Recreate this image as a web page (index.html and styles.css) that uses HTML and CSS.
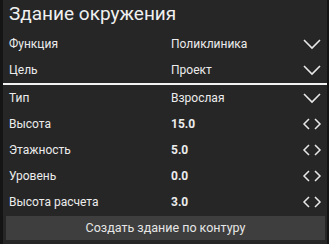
FILE: index.html
```html
<!DOCTYPE html>
<html>
<head>
<meta charset="utf-8">
<link rel="stylesheet" href="styles.css">
</head>
<body>
<div class="panel">
  <div class="title">Здание окружения</div>
  <div class="row">
    <span class="label">Функция</span><span class="value">Поликлиника</span>
    <svg class="icon" viewBox="0 0 20 12"><path d="M2 2 L10 10 L18 2" /></svg>
  </div>
  <div class="row">
    <span class="label">Цель</span><span class="value">Проект</span>
    <svg class="icon" viewBox="0 0 20 12"><path d="M2 2 L10 10 L18 2" /></svg>
  </div>
  <div class="sep"></div>
  <div class="row">
    <span class="label">Тип</span><span class="value">Взрослая</span>
    <svg class="icon" viewBox="0 0 20 12"><path d="M2 2 L10 10 L18 2" /></svg>
  </div>
  <div class="row">
    <span class="label">Высота</span><span class="value num">15.0</span>
    <svg class="icon lr" viewBox="0 0 20 14"><path d="M7 2 L2 7 L7 12 M13 2 L18 7 L13 12" /></svg>
  </div>
  <div class="row">
    <span class="label">Этажность</span><span class="value num">5.0</span>
    <svg class="icon lr" viewBox="0 0 20 14"><path d="M7 2 L2 7 L7 12 M13 2 L18 7 L13 12" /></svg>
  </div>
  <div class="row">
    <span class="label">Уровень</span><span class="value num">0.0</span>
    <svg class="icon lr" viewBox="0 0 20 14"><path d="M7 2 L2 7 L7 12 M13 2 L18 7 L13 12" /></svg>
  </div>
  <div class="row">
    <span class="label">Высота расчета</span><span class="value num">3.0</span>
    <svg class="icon lr" viewBox="0 0 20 14"><path d="M7 2 L2 7 L7 12 M13 2 L18 7 L13 12" /></svg>
  </div>
  <div class="btn">Создать здание по контуру</div>
</div>
</body>
</html>
```
FILE: styles.css
```css
html, body {
  margin: 0;
  padding: 0;
  background: #141414;
  width: 329px;
  height: 244px;
  overflow: hidden;
}
.panel {
  margin-left: 3px;
  width: 324px;
  height: 244px;
  background: #262626;
  font-family: Roboto, "Noto Sans", sans-serif;
  color: #ececec;
  display: flex;
  flex-direction: column;
}
.panel > * {
  flex-shrink: 0;
}
.title {
  height: 31px;
  font-size: 19px;
  line-height: 28px;
  padding-left: 6px;
  color: #f0f0f0;
}
.row {
  height: 26px;
  display: flex;
  align-items: center;
  font-size: 12px;
  padding-left: 6px;
}
.label {
  width: 162px;
}
.value {
  flex: 1;
}
.num {
  font-weight: bold;
}
.icon {
  width: 20px;
  height: 12px;
  margin-right: 5px;
  fill: none;
  stroke: #e8e8e8;
  stroke-width: 1.6;
}
.icon.lr {
  height: 14px;
  stroke-width: 1.5;
}
.sep {
  height: 2px;
  background: #f2f2f2;
}
.btn {
  margin: 1px 2px 0 3px;
  height: 24px;
  background: #3e3e3e;
  font-size: 12.5px;
  line-height: 24px;
  text-align: center;
  color: #e6e6e6;
}
```
